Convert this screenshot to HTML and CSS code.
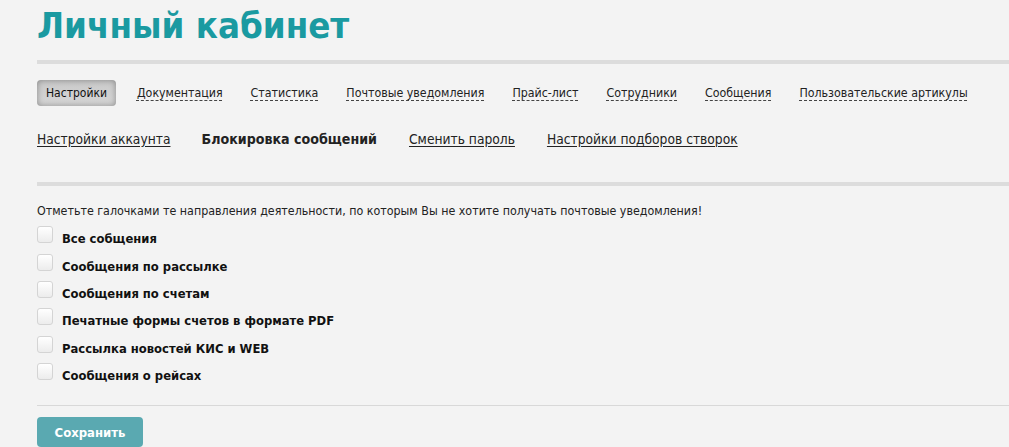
FILE: index.html
```html
<!DOCTYPE html>
<html lang="ru">
<head>
<meta charset="utf-8">
<title>Личный кабинет</title>
<link rel="stylesheet" href="styles.css">
</head>
<body>
<div class="page">
  <h1 class="title">Личный кабинет</h1>
  <div class="rule"></div>
  <nav class="tabs">
    <span class="tab active">Настройки</span>
    <a class="tab">Документация</a>
    <a class="tab">Статистика</a>
    <a class="tab">Почтовые уведомления</a>
    <a class="tab">Прайс-лист</a>
    <a class="tab">Сотрудники</a>
    <a class="tab">Сообщения</a>
    <a class="tab">Пользовательские артикулы</a>
  </nav>
  <nav class="subnav">
    <a class="sub">Настройки аккаунта</a>
    <span class="sub current">Блокировка сообщений</span>
    <a class="sub">Сменить пароль</a>
    <a class="sub">Настройки подборов створок</a>
  </nav>
  <div class="rule rule-2"></div>
  <form class="form">
    <p class="hint">Отметьте галочками те направления деятельности, по которым Вы не хотите получать почтовые уведомления!</p>
    <ul class="checks">
      <li class="check"><span class="box"></span><span class="label">Все собщения</span></li>
      <li class="check"><span class="box"></span><span class="label">Сообщения по рассылке</span></li>
      <li class="check"><span class="box"></span><span class="label">Сообщения по счетам</span></li>
      <li class="check"><span class="box"></span><span class="label">Печатные формы счетов в формате PDF</span></li>
      <li class="check"><span class="box"></span><span class="label">Рассылка новостей КИС и WEB</span></li>
      <li class="check"><span class="box"></span><span class="label">Сообщения о рейсах</span></li>
    </ul>
    <div class="thin"></div>
    <button type="button" class="save">Сохранить</button>
  </form>
</div>
</body>
</html>
```
FILE: styles.css
```css
html, body {
  margin: 0;
  padding: 0;
  background: #f3f3f3;
}
body {
  font-family: "DejaVu Sans Condensed", "DejaVu Sans", sans-serif;
  color: #222;
  overflow: hidden;
}
.page {
  padding-left: 37px;
}
.title {
  margin: 0;
  padding-top: 4px;
  height: 56px;
  font-size: 36.3px;
  line-height: 44px;
  font-weight: bold;
  color: #1a9aa1;
}
.rule {
  height: 4px;
  background: #dcdcdc;
}
.tabs {
  display: flex;
  align-items: center;
  gap: 10px;
  margin-top: 15px;
  margin-left: -9px;
  height: 27px;
  white-space: nowrap;
}
.tab {
  font-size: 12.3px;
  line-height: 16px;
  padding: 0 9px;
  color: #222;
  text-decoration: underline dashed #444;
  text-underline-offset: 3px;
  white-space: nowrap;
}
.tab.active {
  margin-left: 9px;
  margin-right: 2px;
  padding: 5px 9px 5px 9px;
  font-size: 12px;
  color: #111;
  text-decoration: none;
  border-radius: 4px;
  background: linear-gradient(#c9c9c9, #d6d6d6);
  box-shadow: inset 0 0 6px rgba(0,0,0,0.35);
}
.subnav {
  display: flex;
  gap: 32px;
  margin-top: 23px;
  height: 20px;
  white-space: nowrap;
}
.sub {
  font-size: 13.7px;
  line-height: 20px;
  color: #222;
  text-decoration: underline;
  text-underline-offset: 2px;
}
.sub:first-child {
  margin-right: -1px;
}
.sub.current {
  font-size: 14.1px;
  font-weight: bold;
  text-decoration: none;
}
.rule-2 {
  margin-top: 33px;
}
.form {
  margin: 0;
}
.hint {
  margin: 17px 0 0;
  font-size: 12.35px;
  line-height: 16px;
  white-space: nowrap;
}
.checks {
  list-style: none;
  margin: 6px 0 0;
  padding: 0;
}
.check {
  display: flex;
  align-items: center;
  height: 27.4px;
}
.box {
  width: 14px;
  height: 15px;
  border: 1px solid #d4d4d4;
  border-radius: 3px;
  background: linear-gradient(#ffffff, #ececec);
  margin-top: -8px;
  margin-right: 9px;
  box-sizing: content-box;
}
.label {
  font-size: 12.9px;
  font-weight: bold;
  color: #111;
}
.thin {
  margin-top: 16px;
  height: 1px;
  background: #d8d8d8;
}
.save {
  display: block;
  margin-top: 11px;
  width: 106px;
  height: 30px;
  border: 0;
  border-radius: 4px;
  background: #5aa9b1;
  color: #fff;
  font-family: inherit;
  font-size: 13px;
  font-weight: bold;
  padding: 0;
}
```
